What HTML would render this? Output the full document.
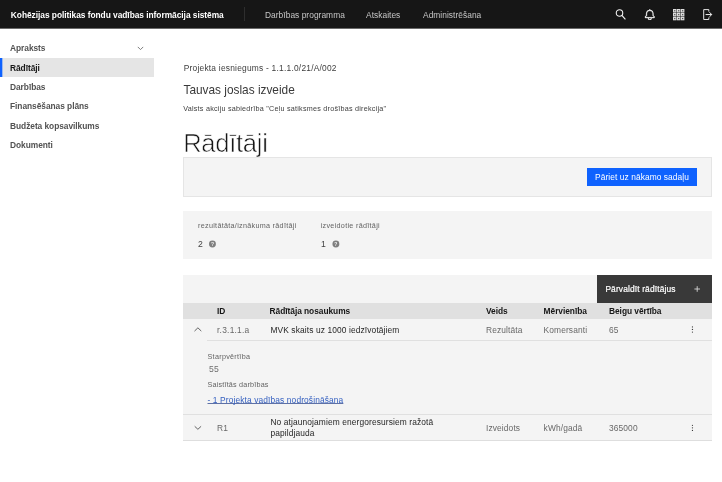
<!DOCTYPE html>
<html lang="lv">
<head>
<meta charset="utf-8">
<title>Rādītāji</title>
<style>
*{box-sizing:border-box;margin:0;padding:0}
html,body{width:722px;height:482px;overflow:hidden;background:#fff;font-family:"Liberation Sans",sans-serif;color:#161616}
body{position:relative;will-change:transform}
.abs{position:absolute;white-space:nowrap}
.box{position:absolute}
#hdr{position:absolute;left:0;top:0;width:722px;height:28px;background:#161616;border-bottom:0}
#hdr:after{content:"";position:absolute;left:0;top:28px;width:722px;height:1px;background:#6a6a6a}
#hdr .t{position:absolute;top:0;transform:translateY(0.5px);line-height:29px;color:#fff;font-size:8.4px;white-space:nowrap}
#hdr .brand{left:10.8px;font-weight:bold;font-size:8.4px;color:#fff;letter-spacing:-0.04px}
#hdr .sep{position:absolute;left:244px;top:7px;width:1px;height:14px;background:#2e2e2e}
#hdr .nav{color:#c6c6c6;letter-spacing:0.04px}
.side{position:absolute;left:10px;font-size:8.4px;font-weight:bold;color:#525252;line-height:12px;white-space:nowrap;letter-spacing:-0.05px}
#active{position:absolute;left:0;top:58px;width:154px;height:19px;background:#e5e5e5}
#active i{position:absolute;left:0;top:0;width:2px;height:19px;background:#0f62fe;box-shadow:1px 0 0 #9dbaee}
.th{font-size:8.4px;font-weight:bold;line-height:14px;color:#161616;letter-spacing:-0.05px}
.td{font-size:8.4px;line-height:12px;color:#262626;letter-spacing:0.12px}
.td2{font-size:8.4px;line-height:12px;color:#686868;letter-spacing:0.12px}
.lbl{font-size:7.2px;line-height:10px;color:#636363;letter-spacing:0.3px}
.dots{width:2px}
.dots i{display:block;width:1px;height:1px;background:#393939;margin-bottom:1.6px}
</style>
</head>
<body>
<div id="hdr">
  <div class="t brand">Kohēzijas politikas fondu vadības informācija sistēma</div>
  <div class="sep"></div>
  <div class="t nav" style="left:265px">Darbības programma</div>
  <div class="t nav" style="left:366px">Atskaites</div>
  <div class="t nav" style="left:423px">Administrēšana</div>
  <svg class="abs" style="left:614px;top:8px" width="13" height="13" viewBox="0 0 13 13" fill="none" stroke="#f4f4f4" stroke-width="1.08"><circle cx="5.5" cy="5" r="3.25"/><path d="M7.9 7.4l3.5 3.9"/></svg>
  <svg class="abs" style="left:643.8px;top:8.6px" width="11.6" height="11.6" viewBox="0 0 32 32" fill="#fff" stroke="#fff" stroke-width="0.9"><path d="M28.7 20.3L26 17.6V13a10 10 0 0 0-9-9.95V1h-2v2.05A10 10 0 0 0 6 13v4.6l-2.7 2.7a1 1 0 0 0-.3.7v3a1 1 0 0 0 1 1h7v.8a5 5 0 0 0 10 0V25h7a1 1 0 0 0 1-1v-3a1 1 0 0 0-.3-.7zM19 25.8a3 3 0 0 1-6 0V25h6zM27 23H5v-1.6l2.7-2.7a1 1 0 0 0 .3-.7v-5a8 8 0 0 1 16 0v5a1 1 0 0 0 .3.7l2.7 2.7z"/></svg>
  <svg class="abs" style="left:672.7px;top:8.8px" width="12" height="12" viewBox="0 0 12 12"><rect x="0.0" y="0.0" width="3.5" height="3.5" fill="#dcdcdc"/><rect x="1.15" y="1.15" width="1.2" height="1.2" fill="#4a4a4a"/><rect x="3.95" y="0.0" width="3.5" height="3.5" fill="#dcdcdc"/><rect x="5.1" y="1.15" width="1.2" height="1.2" fill="#4a4a4a"/><rect x="7.9" y="0.0" width="3.5" height="3.5" fill="#dcdcdc"/><rect x="9.05" y="1.15" width="1.2" height="1.2" fill="#4a4a4a"/><rect x="0.0" y="3.9" width="3.5" height="3.5" fill="#dcdcdc"/><rect x="1.15" y="5.05" width="1.2" height="1.2" fill="#4a4a4a"/><rect x="3.95" y="3.9" width="3.5" height="3.5" fill="#dcdcdc"/><rect x="5.1" y="5.05" width="1.2" height="1.2" fill="#4a4a4a"/><rect x="7.9" y="3.9" width="3.5" height="3.5" fill="#dcdcdc"/><rect x="9.05" y="5.05" width="1.2" height="1.2" fill="#4a4a4a"/><rect x="0.0" y="7.8" width="3.5" height="3.5" fill="#dcdcdc"/><rect x="1.15" y="8.95" width="1.2" height="1.2" fill="#4a4a4a"/><rect x="3.95" y="7.8" width="3.5" height="3.5" fill="#dcdcdc"/><rect x="5.1" y="8.95" width="1.2" height="1.2" fill="#4a4a4a"/><rect x="7.9" y="7.8" width="3.5" height="3.5" fill="#dcdcdc"/><rect x="9.05" y="8.95" width="1.2" height="1.2" fill="#4a4a4a"/></svg>
  <svg class="abs" style="left:702px;top:8px" width="12" height="13" viewBox="0 0 12 13" fill="none" stroke="#ececec" stroke-width="0.95"><path d="M6.8 3.6V1.6H1.7v9.9h5.1V9.5"/><path stroke="#fff" stroke-width="0.95" d="M3.6 6.55h5.9M7.4 4.2l2.35 2.35L7.4 8.9"/></svg>
</div>

<div id="active"><i></i></div>
<div class="side" style="top:42px">Apraksts</div>
<svg class="abs" style="left:137px;top:46px" width="7" height="5" viewBox="0 0 7 5" fill="none" stroke="#6f6f6f" stroke-width="0.9"><path d="M.8 .9l2.7 2.7L6.2 .9"/></svg>
<div class="side" style="top:62px;color:#161616">Rādītāji</div>
<div class="side" style="top:81px">Darbības</div>
<div class="side" style="top:100px">Finansēšanas plāns</div>
<div class="side" style="top:119.5px">Budžeta kopsavilkums</div>
<div class="side" style="top:139px">Dokumenti</div>

<div class="abs" style="left:183.7px;top:61.6px;font-size:8.4px;line-height:12px;color:#3d3d3d;letter-spacing:0.23px">Projekta iesniegums - 1.1.1.0/21/A/002</div>
<div class="abs" style="left:183.5px;top:82px;transform:translateY(0.6px);font-size:11.85px;line-height:14px;color:#393939">Tauvas joslas izveide</div>
<div class="abs" style="left:183.2px;top:103px;transform:translateY(0.6px);font-size:7.2px;line-height:9px;color:#3d3d3d;letter-spacing:0.24px">Valsts akciju sabiedrība "Ceļu satiksmes drošības direkcija"</div>
<div class="abs" style="left:183.2px;top:126.6px;font-size:25.6px;letter-spacing:-0.3px;line-height:32px;color:#161616;-webkit-text-stroke:0.6px #fff">Rādītāji</div>

<div class="box" style="left:183px;top:157px;width:529px;height:40px;background:#f4f4f4;border:1px solid #e5e5e5"></div>
<div class="abs" style="left:587px;top:168px;width:110px;height:18px;background:#0f62fe;color:#fff;font-size:8.4px;line-height:19px;text-align:center;letter-spacing:0.08px">Pāriet uz nākamo sadaļu</div>

<div class="box" style="left:183px;top:211px;width:529px;height:48px;background:#f4f4f4"></div>
<div class="abs lbl" style="left:198px;top:221px">rezultātāta/iznākuma rādītāji</div>
<div class="abs lbl" style="left:320.7px;top:221px">izveidotie rādītāji</div>
<div class="abs" style="left:198px;top:238px;font-size:9.6px;line-height:12px;color:#424242;transform:scaleX(0.9);transform-origin:0 0">2</div>
<div class="abs" style="left:320.5px;top:238px;font-size:9.6px;line-height:12px;color:#424242;transform:scaleX(0.9);transform-origin:0 0">1</div>
<svg class="abs" style="left:208px;top:240px" width="10" height="9" viewBox="0 0 10 9"><circle cx="4.44" cy="4.05" r="3.45" fill="#7f7f7f"/><text x="4.44" y="5.95" font-size="5" font-weight="bold" text-anchor="middle" fill="#f4f4f4" font-family="Liberation Sans, sans-serif">?</text></svg>
<svg class="abs" style="left:331px;top:240px" width="10" height="9" viewBox="0 0 10 9"><circle cx="4.899999999999977" cy="4.05" r="3.45" fill="#7f7f7f"/><text x="4.899999999999977" y="5.95" font-size="5" font-weight="bold" text-anchor="middle" fill="#f4f4f4" font-family="Liberation Sans, sans-serif">?</text></svg>

<div class="box" style="left:183px;top:275px;width:529px;height:29px;background:#f4f4f4"></div>
<div class="abs" style="left:597px;top:275px;width:115px;height:29px;background:#393939;color:#fff;font-size:8.4px;line-height:28px;padding-left:8.4px;letter-spacing:0.14px;-webkit-text-stroke:0.2px #fff">Pārvaldīt rādītājus</div>
<svg class="abs" style="left:694px;top:286px" width="6" height="6" viewBox="0 0 6 6" stroke="#d6d6d6" stroke-width="0.9" fill="none"><path d="M3.2 .2v5.6M.4 3h5.6"/></svg>

<div class="box" style="left:183px;top:303px;width:529px;height:16px;background:#e0e0e0"></div>
<div class="abs th" style="left:217px;top:303.5px">ID</div>
<div class="abs th" style="left:269.6px;top:303.5px">Rādītāja nosaukums</div>
<div class="abs th" style="left:486px;top:303.5px">Veids</div>
<div class="abs th" style="left:543.6px;top:303.5px">Mērvienība</div>
<div class="abs th" style="left:609px;top:303.5px">Beigu vērtība</div>

<div class="box" style="left:183px;top:319px;width:529px;height:97px;background:#f4f4f4"></div>
<div class="box" style="left:207px;top:340px;width:505px;height:1px;background:#e0e0e0"></div>
<div class="box" style="left:183px;top:414px;width:529px;height:1px;background:#e0e0e0"></div>
<svg class="abs" style="left:193px;top:325px" width="10" height="8" viewBox="0 0 10 8" fill="none" stroke="#5c5c5c" stroke-width="0.95"><path d="M1.5 6.1l3.4-3.3 3.4 3.3"/></svg>
<div class="abs td2" style="left:217px;top:324px;letter-spacing:0.25px">r.3.1.1.a</div>
<div class="abs td" style="left:270.4px;top:324px">MVK skaits uz 1000 iedzīvotājiem</div>
<div class="abs td2" style="left:486px;top:324px">Rezultāta</div>
<div class="abs td2" style="left:543.6px;top:324px">Komersanti</div>
<div class="abs td2" style="left:609px;top:324px">65</div>
<svg class="abs" style="left:690px;top:324px" width="5" height="11" viewBox="0 0 5 11" fill="#3a3a3a"><circle cx="2.45" cy="2.9" r="0.62"/><circle cx="2.45" cy="5.45" r="0.66"/><circle cx="2.45" cy="8.05" r="0.62"/></svg>

<div class="abs lbl" style="left:207.5px;top:352px">Starpvērtība</div>
<div class="abs" style="left:209px;top:363px;font-size:8.6px;line-height:12px;color:#6f6f6f;letter-spacing:0.3px">55</div>
<div class="abs lbl" style="left:207.5px;top:379.5px;letter-spacing:0.2px">Saistītās darbības</div>
<div class="abs" style="left:207.5px;top:394px;font-size:8.4px;line-height:12px;color:#3560c0;text-decoration:underline;text-decoration-thickness:1px;text-underline-offset:0.4px;text-decoration-color:rgba(44,70,140,0.75);text-decoration-skip-ink:none;letter-spacing:0.12px">- 1 Projekta vadības nodrošināšana</div>

<div class="box" style="left:183px;top:415px;width:529px;height:26px;background:#f4f4f4;border-bottom:1px solid #dedede"></div>
<svg class="abs" style="left:193px;top:424px" width="10" height="8" viewBox="0 0 10 8" fill="none" stroke="#5c5c5c" stroke-width="0.95"><path d="M1.7 2.3l3.2 3 3.2-3"/></svg>
<div class="abs td2" style="left:217px;top:422px">R1</div>
<div class="abs td" style="left:270.4px;top:417.4px;white-space:normal;width:178px;line-height:10.7px">No atjaunojamiem energoresursiem ražotā papildjauda</div>
<div class="abs td2" style="left:486px;top:422px">Izveidots</div>
<div class="abs td2" style="left:543.6px;top:422px">kWh/gadā</div>
<div class="abs td2" style="left:609px;top:422px">365000</div>
<svg class="abs" style="left:690px;top:422px" width="5" height="11" viewBox="0 0 5 11" fill="#3a3a3a"><circle cx="2.45" cy="3.3" r="0.62"/><circle cx="2.45" cy="5.85" r="0.66"/><circle cx="2.45" cy="8.4" r="0.62"/></svg>
</body>
</html>
